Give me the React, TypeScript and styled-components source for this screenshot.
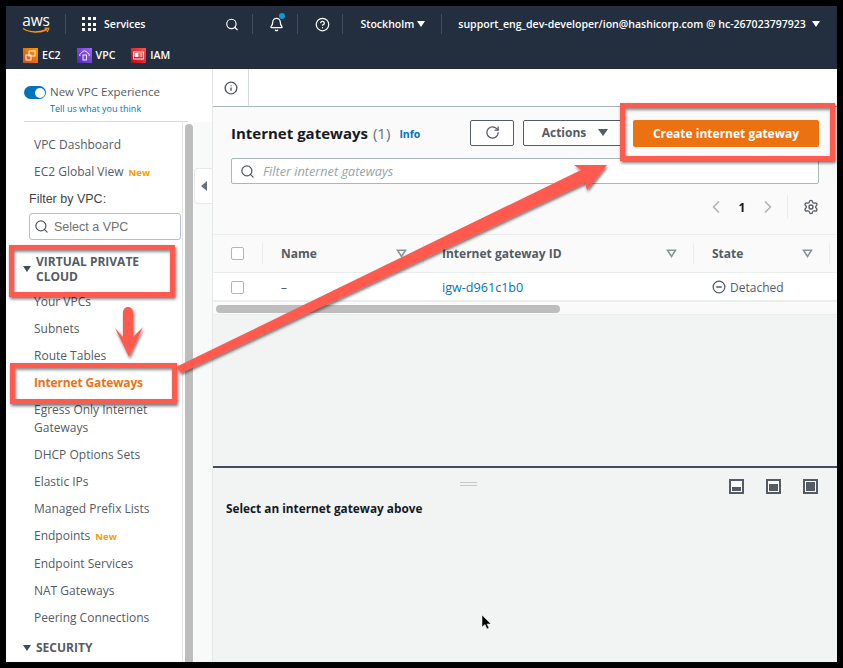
import styled, { createGlobalStyle } from "styled-components";
import { Search, RotateCw, ChevronLeft, ChevronRight, Settings, CircleMinus, Info, CircleHelp, Bell } from "lucide-react";

const GlobalStyle = createGlobalStyle`
  html, body { margin: 0; padding: 0; background: #000; }
  * { box-sizing: border-box; }
  body { font-family: "Open Sans", "Liberation Sans", sans-serif; font-size: 12px; color: #545b64; }
`;

const Frame = styled.div`
  position: relative;
  width: 843px;
  height: 668px;
  padding: 6px;
  background: #000;
  overflow: hidden;
`;
const Screen = styled.div`
  width: 831px;
  height: 656px;
  display: flex;
  flex-direction: column;
  overflow: hidden;
  background: #fff;
`;

/* top nav */
const Nav = styled.header`
  height: 63px;
  flex: none;
  background: #232f3e;
  color: #fff;
  display: flex;
  flex-direction: column;
`;
const NavTop = styled.div`
  height: 36px;
  padding-left: 16px;
  display: flex;
  align-items: center;
`;
const NavBottom = styled.div`
  height: 26px;
  padding-left: 17px;
  display: flex;
  align-items: center;
`;
const LogoBox = styled.div`
  width: 28px;
  height: 22px;
  flex: none;
`;
const LogoText = styled.span`
  display: block;
  font-size: 15.5px;
  line-height: 14px;
  text-align: center;
  letter-spacing: -0.1px;
`;
const NavDivider = styled.span<{ $left: number; $right: number }>`
  width: 1px;
  height: 20px;
  flex: none;
  background: #414d5c;
  margin-left: ${(p) => p.$left}px;
  margin-right: ${(p) => p.$right}px;
`;
const GridIcon = styled.div`
  width: 14px;
  height: 14px;
  flex: none;
  display: grid;
  grid-template-columns: repeat(3, 3px);
  grid-auto-rows: 3px;
  gap: 2.5px;
  margin-right: 8px;
  span { background: #fff; }
`;
const NavText = styled.span`
  font-size: 10.55px;
  font-weight: 600;
  white-space: nowrap;
`;
const NavIconSlot = styled.span<{ $width: number; $inset?: number }>`
  width: ${(p) => p.$width}px;
  padding-left: ${(p) => p.$inset ?? 0}px;
  flex: none;
  display: flex;
  justify-content: center;
  position: relative;
`;
const Dot = styled.i`
  position: absolute;
  top: -4px;
  right: 1px;
  width: 6px;
  height: 6px;
  border-radius: 50%;
  background: #0a9bd2;
`;
const Caret = styled.span<{ $color?: string; $left?: number; $size?: number }>`
  width: 0;
  height: 0;
  flex: none;
  margin-left: ${(p) => p.$left ?? 5}px;
  border-left: ${(p) => p.$size ?? 4}px solid transparent;
  border-right: ${(p) => p.$size ?? 4}px solid transparent;
  border-top: ${(p) => (p.$size ?? 4) + 2}px solid ${(p) => p.$color ?? "#fff"};
`;
const Shortcut = styled.span`
  display: flex;
  align-items: center;
  gap: 4px;
  margin-right: 16px;
`;

/* body */
const Body = styled.div`
  flex: 1;
  display: flex;
  min-height: 0;
`;
const SidePane = styled.aside`
  width: 207px;
  flex: none;
  display: flex;
  flex-direction: column;
  background: #fff;
  border-right: 1px solid #e6e8e8;
`;
const Experience = styled.div`
  height: 53px;
  flex: none;
  margin-left: 18px;
  margin-right: 24px;
  padding-top: 15px;
  display: flex;
  gap: 4px;
  border-bottom: 1px solid #d5dbdb;
`;
const Toggle = styled.span`
  width: 22px;
  height: 13px;
  margin-top: 2px;
  flex: none;
  border-radius: 7px;
  background: #0073bb;
  position: relative;
  &::after {
    content: "";
    position: absolute;
    top: 1.5px;
    right: 1.5px;
    width: 10px;
    height: 10px;
    border-radius: 50%;
    background: #fff;
  }
`;
const ExperienceTitle = styled.div`
  font-size: 11.5px;
  line-height: 16px;
  color: #545b64;
  white-space: nowrap;
`;
const ExperienceLink = styled.div`
  font-size: 9px;
  line-height: 15px;
  margin-top: 1px;
  color: #0073bb;
`;
const SideBody = styled.div`
  flex: 1;
  display: flex;
  min-height: 0;
`;
const SideList = styled.nav`
  width: 177px;
  flex: none;
  padding-top: 14px;
  border-right: 1px solid #e6e8e8;
  overflow: hidden;
`;
const NavItem = styled.div<{ $active?: boolean }>`
  padding: 0 0 0 28px;
  line-height: 18px;
  margin-bottom: 9px;
  font-size: 12px;
  white-space: nowrap;
  color: ${(p) => (p.$active ? "#ec7211" : "#545b64")};
  font-weight: ${(p) => (p.$active ? 700 : 400)};
  letter-spacing: ${(p) => (p.$active ? "-0.15px" : "0")};
`;
const NewTag = styled.span`
  color: #ff9900;
  font-size: 9.5px;
  font-weight: 700;
  margin-left: 5px;
`;
const FilterLabel = styled.div`
  margin-top: -1px;
  padding-left: 23px;
  font-family: "Liberation Sans", sans-serif;
  font-size: 12.5px;
  line-height: 18px;
  color: #444;
`;
const VpcSelect = styled.div`
  width: 152px;
  height: 27px;
  margin: 5px 0 0 23px;
  padding-left: 4px;
  display: flex;
  align-items: center;
  gap: 5px;
  border: 1px solid #b6bec9;
  border-radius: 3px;
  font-family: "Liberation Sans", sans-serif;
  font-size: 12.5px;
  color: #6f6f6f;
`;
const SectionHead = styled.div<{ $top: number; $bottom: number }>`
  display: flex;
  gap: 5px;
  margin: ${(p) => p.$top}px 0 ${(p) => p.$bottom}px 17px;
  font-size: 12px;
  line-height: 15px;
  font-weight: 700;
  color: #545b64;
  align-items: center;
`;
const Scrollbar = styled.div`
  width: 11px;
  flex: none;
  padding: 2px 0 0 2px;
  background: #fff;
`;
const ScrollThumb = styled.div`
  width: 8px;
  height: 100%;
  border-radius: 4px 4px 0 0;
  background: #bdbdbd;
`;
const Gutter = styled.div`
  flex: 1;
  padding-top: 46px;
  display: flex;
  justify-content: flex-end;
  background: #f8f9f9;
`;
const CollapseTab = styled.div`
  width: 18px;
  height: 36px;
  display: flex;
  align-items: center;
  justify-content: center;
  background: #fff;
  border: 1px solid #e6e8e8;
  border-right: none;
  border-radius: 4px 0 0 4px;
  &::before {
    content: "";
    border-top: 5px solid transparent;
    border-bottom: 5px solid transparent;
    border-right: 6px solid #687078;
  }
`;

/* main */
const Main = styled.main`
  flex: 1;
  min-width: 0;
  display: flex;
  flex-direction: column;
  background: #f2f3f3;
`;
const TabStrip = styled.div`
  height: 38px;
  flex: none;
  background: #fff;
  border-bottom: 1px solid #aab7b8;
`;
const InfoTab = styled.div`
  width: 36px;
  height: 37px;
  display: flex;
  align-items: center;
  justify-content: center;
  color: #545b64;
  border-right: 1px solid #d5dbdb;
`;
const Upper = styled.section`
  background: #fafafa;
  padding: 13px 18px 0;
  height: 127px;
  flex: none;
`;
const TitleRow = styled.div`
  height: 27px;
  display: flex;
  align-items: flex-start;
`;
const Title = styled.h1`
  margin: 0;
  font-size: 15px;
  line-height: 27px;
  font-weight: 700;
  white-space: nowrap;
  color: #16191f;
`;
const Count = styled.span`
  font-weight: 400;
  color: #687078;
  margin-left: 5px;
`;
const InfoLink = styled.a`
  margin-left: 9px;
  line-height: 29px;
  font-size: 10.5px;
  font-weight: 700;
  color: #0073bb;
`;
const OutlineButton = styled.button<{ $width: number; $left?: string }>`
  width: ${(p) => p.$width}px;
  height: 26px;
  margin-left: ${(p) => p.$left ?? "9px"};
  padding: 0 0 1px;
  flex: none;
  display: flex;
  align-items: center;
  justify-content: center;
  background: #fff;
  border: 1px solid #545b64;
  border-radius: 2px;
  font: 700 12px "Open Sans", sans-serif;
  color: #545b64;
`;
const ActionsButton = styled(OutlineButton)`
  padding-left: 4px;
`;
const CreateButton = styled.button`
  width: 186px;
  height: 27px;
  margin-left: 10px;
  padding: 0 0 1px;
  flex: none;
  background: #ec7211;
  border: none;
  border-radius: 2px;
  color: #fff;
  font: 700 12px "Open Sans", sans-serif;
`;
const FilterBox = styled.div`
  height: 26px;
  margin-top: 11px;
  padding-left: 8px;
  display: flex;
  align-items: center;
  gap: 8px;
  background: #fff;
  border: 1px solid #aab7b8;
  border-radius: 2px;
  font-size: 12.7px;
  font-style: italic;
  color: #95a5a6;
`;
const Pager = styled.div`
  height: 46px;
  display: flex;
  align-items: center;
  justify-content: flex-end;
  color: #aab7b8;
`;
const PageNumber = styled.span`
  width: 32px;
  text-align: center;
  font-weight: 700;
  color: #16191f;
`;
const PagerRule = styled.span`
  width: 1px;
  height: 24px;
  margin: 0 15px 0 9px;
  background: #eaeded;
`;

const columns = "50px 161px 270px 136px 1fr";
const TableHead = styled.div`
  height: 39px;
  flex: none;
  display: grid;
  grid-template-columns: ${columns};
  background: #fafafa;
  border-top: 1px solid #eaeded;
  border-bottom: 1px solid #eaeded;
`;
const Row = styled.div`
  height: 29px;
  padding-top: 1px;
  flex: none;
  display: grid;
  grid-template-columns: ${columns};
  background: #fff;
  border-bottom: 2px solid #eaeded;
  color: #545b64;
`;
const HeadCell = styled.div<{ $check?: boolean }>`
  display: flex;
  align-items: center;
  padding: 0 ${(p) => (p.$check ? "0" : "17px")} 0 18px;
  font-weight: 700;
  color: #545b64;
  position: relative;
  &::after {
    content: "";
    position: absolute;
    right: 0;
    top: 8px;
    bottom: 8px;
    width: 1px;
    background: #eaeded;
  }
`;
const Cell = styled.div`
  display: flex;
  align-items: center;
  gap: 4px;
  padding-left: 18px;
  white-space: nowrap;
`;
const IdLink = styled.a`
  font-size: 12.6px;
  color: #0073bb;
`;
const Box = styled.span`
  width: 13px;
  height: 13px;
  background: #fff;
  border: 1px solid #aab7b8;
  border-radius: 2px;
`;
const SortSlot = styled.span`
  margin-left: auto;
  display: flex;
`;
const HScroll = styled.div`
  height: 13px;
  flex: none;
  padding: 3px 3px 0;
  background: #fafafa;
  border-bottom: 1px solid #eaeded;
`;
const HThumb = styled.div`
  width: 344px;
  height: 8px;
  border-radius: 4px;
  background: #bdbdbd;
`;
const Blank = styled.div`
  flex: 1;
  border-bottom: 2px solid #414d5c;
`;
const Lower = styled.section`
  height: 194px;
  flex: none;
  position: relative;
  padding: 32px 13px 0;
  display: flex;
  flex-direction: column;
`;
const Handle = styled.div`
  position: absolute;
  top: 14px;
  left: 247px;
  width: 17px;
  height: 4px;
  border-top: 1px solid #c4c9c9;
  border-bottom: 1px solid #c4c9c9;
`;
const PaneIcons = styled.div`
  position: absolute;
  top: 11px;
  right: 19px;
  display: flex;
  gap: 22px;
`;
const PaneIcon = styled.span<{ $fill: string }>`
  width: 15px;
  height: 15px;
  display: flex;
  padding: 1px;
  border: 2px solid #545b64;
  background: #fff;
  &::before {
    content: "";
    width: 100%;
    align-self: ${(p) => (p.$fill === "full" ? "stretch" : "flex-end")};
    height: ${(p) => (p.$fill === "low" ? "45%" : p.$fill === "mid" ? "75%" : "100%")};
    background: #545b64;
  }
`;
const SelectHint = styled.div`
  font-weight: 700;
  font-size: 11.8px;
  line-height: 16px;
  color: #16191f;
`;

/* screenshot annotations */
const Callout = styled.div<{ $x: number; $y: number; $w: number; $h: number }>`
  position: absolute;
  left: ${(p) => p.$x}px;
  top: ${(p) => p.$y}px;
  width: ${(p) => p.$w}px;
  height: ${(p) => p.$h}px;
  border: 5px solid #ff5a4e;
  box-shadow: 1px 2px 3px rgba(0, 0, 0, 0.55), inset 1px 2px 3px rgba(0, 0, 0, 0.45);
`;
const ArrowLayer = styled.svg`
  position: absolute;
  inset: 0;
  width: 843px;
  height: 668px;
  pointer-events: none;
`;
const Pointer = styled.svg`
  position: absolute;
  left: 481px;
  top: 615px;
  width: 12px;
  height: 16px;
`;

function SortMark() {
  return (
    <SortSlot>
      <svg width="11" height="9" viewBox="0 0 11 9">
        <path d="M1.5 1.2h8L5.5 7.4Z" fill="none" stroke="#879596" strokeWidth="1.6" />
      </svg>
    </SortSlot>
  );
}

function ServiceIcon({ from, to, kind }: { from: string; to: string; kind: string }) {
  return (
    <svg width="15" height="15" viewBox="0 0 15 15">
      <defs>
        <linearGradient id={kind} x1="0" y1="1" x2="1" y2="0">
          <stop offset="0" stopColor={from} />
          <stop offset="1" stopColor={to} />
        </linearGradient>
      </defs>
      <rect width="15" height="15" fill={`url(#${kind})`} />
      {kind === "ec2" && (
        <g fill="none" stroke="#fff" strokeWidth="0.9">
          <rect x="6" y="3" width="6" height="5" />
          <rect x="3" y="7" width="5" height="5" />
        </g>
      )}
      {kind === "vpc" && (
        <g fill="none" stroke="#fff" strokeWidth="0.9">
          <path d="M3 8a2 2 0 0 1 1.5-3 3.2 3.2 0 0 1 6 0A2 2 0 0 1 12 8" />
          <rect x="6" y="7" width="3.4" height="5" />
        </g>
      )}
      {kind === "iam" && (
        <g fill="none" stroke="#fff" strokeWidth="0.9">
          <rect x="2.5" y="4" width="10" height="7" />
          <rect x="4" y="5.5" width="3" height="3" fill="#fff" />
          <path d="M8.5 6h3M8.5 8h3" />
        </g>
      )}
    </svg>
  );
}

export default function App() {
  return (
    <>
      <GlobalStyle />
      <Frame>
        <Screen>
          <Nav>
            <NavTop>
              <LogoBox>
                <LogoText>aws</LogoText>
                <svg width="28" height="8" viewBox="0 0 28 8" style={{ display: "block" }}>
                  <path d="M1 1.5c7 4.5 17 4.5 24 1" fill="none" stroke="#ff9900" strokeWidth="1.4" />
                  <path d="M22.5 1.2l4.3.2-1.6 3.6" fill="none" stroke="#ff9900" strokeWidth="1.2" />
                </svg>
              </LogoBox>
              <NavDivider $left={15} $right={16} />
              <GridIcon>
                {Array.from({ length: 9 }).map((_, i) => (
                  <span key={i} />
                ))}
              </GridIcon>
              <NavText>Services</NavText>
              <NavIconSlot $width={94} $inset={80}>
                <Search size={15} strokeWidth={2} />
              </NavIconSlot>
              <NavDivider $left={13} $right={13} />
              <NavIconSlot $width={20}>
                <Bell size={15} strokeWidth={2} />
                <Dot />
              </NavIconSlot>
              <NavDivider $left={11} $right={16} />
              <NavIconSlot $width={16}>
                <CircleHelp size={15} strokeWidth={2} />
              </NavIconSlot>
              <NavDivider $left={12} $right={17} />
              <NavText>Stockholm</NavText>
              <Caret $left={3} />
              <NavDivider $left={16} $right={16} />
              <NavText>support_eng_dev-developer/ion@hashicorp.com @ hc-267023797923</NavText>
              <Caret $left={6} />
            </NavTop>
            <NavBottom>
              <Shortcut>
                <ServiceIcon kind="ec2" from="#c8511b" to="#ff9900" />
                <NavText>EC2</NavText>
              </Shortcut>
              <Shortcut>
                <ServiceIcon kind="vpc" from="#4d27a8" to="#a166ff" />
                <NavText>VPC</NavText>
              </Shortcut>
              <Shortcut>
                <ServiceIcon kind="iam" from="#bd0816" to="#ff5252" />
                <NavText>IAM</NavText>
              </Shortcut>
            </NavBottom>
          </Nav>
          <Body>
            <SidePane>
              <Experience>
                <Toggle />
                <div>
                  <ExperienceTitle>New VPC Experience</ExperienceTitle>
                  <ExperienceLink>Tell us what you think</ExperienceLink>
                </div>
              </Experience>
              <SideBody>
                <SideList>
                  <NavItem>VPC Dashboard</NavItem>
                  <NavItem>
                    EC2 Global View<NewTag>New</NewTag>
                  </NavItem>
                  <FilterLabel>Filter by VPC:</FilterLabel>
                  <VpcSelect>
                    <Search size={15} color="#545b64" />
                    Select a VPC
                  </VpcSelect>
                  <SectionHead $top={14} $bottom={9}>
                    <Caret $color="#414d5c" $left={0} />
                    <span>
                      VIRTUAL PRIVATE
                      <br />
                      CLOUD
                    </span>
                  </SectionHead>
                  <NavItem>Your VPCs</NavItem>
                  <NavItem>Subnets</NavItem>
                  <NavItem>Route Tables</NavItem>
                  <NavItem $active>Internet Gateways</NavItem>
                  <NavItem>
                    Egress Only Internet
                    <br />
                    Gateways
                  </NavItem>
                  <NavItem>DHCP Options Sets</NavItem>
                  <NavItem>Elastic IPs</NavItem>
                  <NavItem>Managed Prefix Lists</NavItem>
                  <NavItem>
                    Endpoints<NewTag>New</NewTag>
                  </NavItem>
                  <NavItem>Endpoint Services</NavItem>
                  <NavItem>NAT Gateways</NavItem>
                  <NavItem>Peering Connections</NavItem>
                  <SectionHead $top={13} $bottom={0}>
                    <Caret $color="#414d5c" $left={0} />
                    <span>SECURITY</span>
                  </SectionHead>
                </SideList>
                <Scrollbar>
                  <ScrollThumb />
                </Scrollbar>
                <Gutter>
                  <CollapseTab />
                </Gutter>
              </SideBody>
            </SidePane>
            <Main>
              <TabStrip>
                <InfoTab>
                  <Info size={14} strokeWidth={2.4} />
                </InfoTab>
              </TabStrip>
              <Upper>
                <TitleRow>
                  <Title>
                    Internet gateways<Count>(1)</Count>
                  </Title>
                  <InfoLink>Info</InfoLink>
                  <OutlineButton $width={44} $left="auto">
                    <RotateCw size={15} />
                  </OutlineButton>
                  <ActionsButton $width={100}>
                    Actions
                    <Caret $color="#545b64" $left={12} $size={5} />
                  </ActionsButton>
                  <CreateButton>Create internet gateway</CreateButton>
                </TitleRow>
                <FilterBox>
                  <Search size={15} color="#545b64" />
                  Filter internet gateways
                </FilterBox>
                <Pager>
                  <ChevronLeft size={20} />
                  <PageNumber>1</PageNumber>
                  <ChevronRight size={20} />
                  <PagerRule />
                  <Settings size={16} color="#545b64" />
                </Pager>
              </Upper>
              <TableHead>
                <HeadCell $check>
                  <Box />
                </HeadCell>
                <HeadCell>
                  Name
                  <SortMark />
                </HeadCell>
                <HeadCell>
                  Internet gateway ID
                  <SortMark />
                </HeadCell>
                <HeadCell>
                  State
                  <SortMark />
                </HeadCell>
                <span />
              </TableHead>
              <Row>
                <Cell>
                  <Box />
                </Cell>
                <Cell>–</Cell>
                <Cell>
                  <IdLink>igw-d961c1b0</IdLink>
                </Cell>
                <Cell>
                  <CircleMinus size={14} strokeWidth={2.2} />
                  Detached
                </Cell>
                <span />
              </Row>
              <HScroll>
                <HThumb />
              </HScroll>
              <Blank />
              <Lower>
                <Handle />
                <PaneIcons>
                  <PaneIcon $fill="low" />
                  <PaneIcon $fill="mid" />
                  <PaneIcon $fill="full" />
                </PaneIcons>
                <SelectHint>Select an internet gateway above</SelectHint>
              </Lower>
            </Main>
          </Body>
        </Screen>
        <Callout $x={9} $y={245} $w={166} $h={52} />
        <Callout $x={10} $y={363} $w={167} $h={41} />
        <Callout $x={620} $y={103} $w={215} $h={58} />
        <ArrowLayer viewBox="0 0 843 668">
          <defs>
            <filter id="arrowShadow" x="-10%" y="-10%" width="120%" height="130%">
              <feDropShadow dx="1" dy="2" stdDeviation="1.5" floodColor="#000" floodOpacity="0.55" />
            </filter>
          </defs>
          <g fill="#ff5a4e" filter="url(#arrowShadow)">
            <path d="M178 366Q177 370 181 373L585 183L587 190L607 165L574 165L581 170Z" />
            <path d="M123 312a5 5 0 0 1 10 0V337L143 327L129 357L115 328L123 337Z" />
          </g>
        </ArrowLayer>
        <Pointer viewBox="0 0 12 16">
          <path d="M1 0V12L4 9.5L6 14L8 13L6 9L10 9Z" fill="#000" stroke="#fff" strokeWidth="0.5" />
        </Pointer>
      </Frame>
    </>
  );
}
